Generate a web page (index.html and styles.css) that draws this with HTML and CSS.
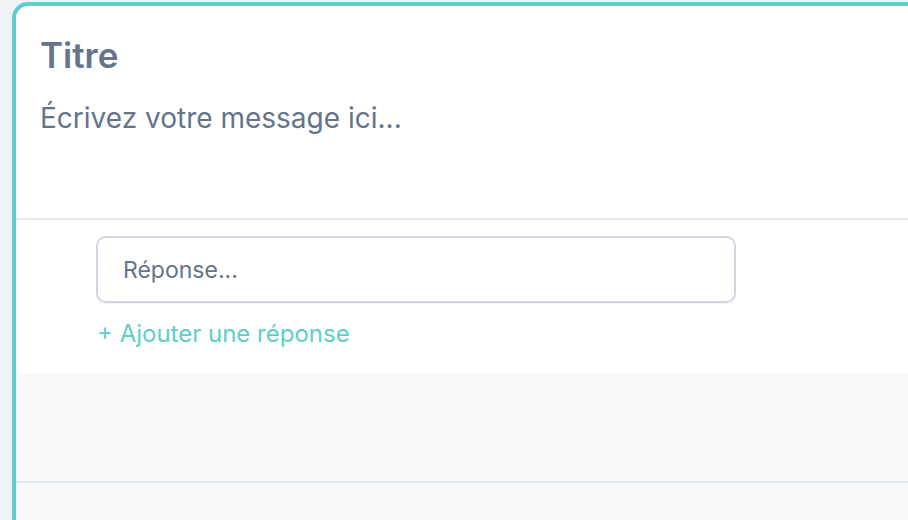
FILE: index.html
```html
<!DOCTYPE html>
<html lang="fr">
<head>
<meta charset="utf-8">
<link rel="stylesheet" href="styles.css">
</head>
<body>
<div class="card">
  <div class="card-head">
    <h1 class="title">Titre</h1>
    <p class="message">Écrivez votre message ici...</p>
  </div>
  <div class="answers">
    <div class="answer-input">Réponse...</div>
    <a class="add-answer">+ Ajouter une réponse</a>
  </div>
  <div class="card-foot"></div>
  <div class="card-rest"></div>
</div>
</body>
</html>
```
FILE: styles.css
```css
html, body {
  margin: 0;
  padding: 0;
  height: 100%;
  overflow: hidden;
  background: #f0f4f9;
  font-family: Inter, "Noto Sans", sans-serif;
}
.card {
  margin: 2px 0 0 12px;
  width: 1000px;
  background: #fff;
  border-left: 4px solid #5dcfc7;
  border-top: 4px solid #5dcfc7;
  border-top-left-radius: 16px;
  min-height: 600px;
}
.card-head {
  padding: 29px 24px 0 24px;
  height: 183px;
  border-bottom: 2px solid #e5e9f0;
}
.title {
  margin: 0;
  font-size: 35px;
  font-weight: 600;
  line-height: 40px;
  color: #64748b;
}
.message {
  margin: 26px 0 0 0;
  font-size: 28px;
  line-height: 34px;
  color: #64748b;
}
.answers {
  padding: 16px 0 0 80px;
  height: 153px;
  box-sizing: border-box;
}
.answer-input {
  width: 640px;
  height: 67px;
  box-sizing: border-box;
  border: 2px solid #cfd6e2;
  border-radius: 10px;
  padding: 0 25px;
  display: flex;
  align-items: center;
  font-size: 23px;
  color: #64748b;
  box-shadow: 0 1px 2px rgba(15, 23, 42, 0.06);
}
.add-answer {
  display: block;
  margin-top: 15px;
  padding-left: 1px;
  font-size: 24px;
  line-height: 32px;
  color: #5dcfc7;
}
.card-foot {
  height: 108px;
  background: #f8f9fb;
  border-bottom: 2px solid #e2e6ee;
}
.card-rest {
  height: 300px;
  background: #f8f9fb;
}
```
